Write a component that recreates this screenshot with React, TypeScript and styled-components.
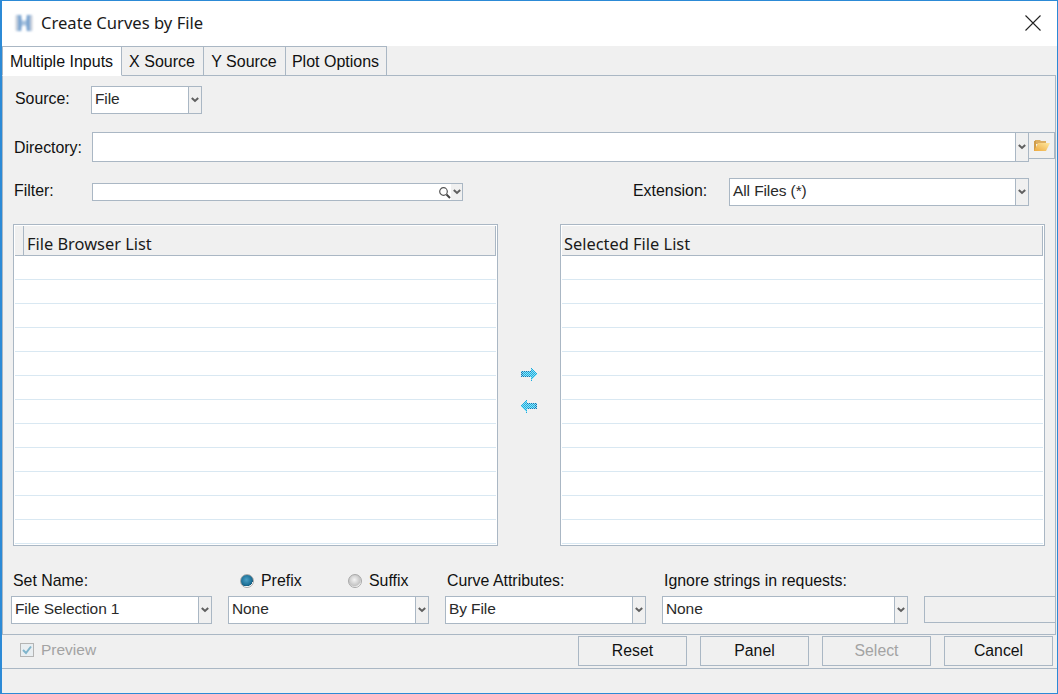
import React from "react";
import styled, { createGlobalStyle } from "styled-components";

const Global = createGlobalStyle`
  html, body { margin: 0; padding: 0; background: #fff; }
  * { box-sizing: border-box; }
`;

const line = "#aab7c4";
const sans = `"Liberation Sans", Arial, sans-serif`;

const Frame = styled.div`
  width: 1058px; height: 694px; display: flex; flex-direction: column;
  border: 1px solid #2c8ad6; border-left-width: 2px; background: #f0f0f0;
  font-family: ${sans}; font-size: 16px; color: #111; overflow: hidden;
`;
const TitleBar = styled.div`
  height: 45px; background: #fff; display: flex; align-items: center;
  padding: 0 16px 1px 11px; flex: none;
`;
const Title = styled.div`
  margin-left: 6px; padding-bottom: 1px; font-family: "Noto Sans", "Open Sans", sans-serif; font-size: 16.6px; color: #1a1a1a;
`;
const CloseBtn = styled.div`
  margin-left: auto; width: 16px; height: 16px; display: flex;
`;
const TabBar = styled.div`
  height: 30px; display: flex; align-items: flex-end; flex: none; margin-bottom: -1px;
  position: relative; z-index: 1;
`;
const Tab = styled.div<{ $active?: boolean; $w: number }>`
  width: ${(p) => p.$w}px; height: 30px; display: flex; align-items: center; justify-content: center;
  border: 1px solid ${line}; border-left-width: ${(p) => (p.$active ? 1 : 0)}px;
  border-bottom-color: ${(p) => (p.$active ? "#fff" : line)};
  background: ${(p) => (p.$active ? "#fff" : "#f0f0f0")};
  font-size: 16px; padding: 1px 1px 0 0;
`;
const Panel = styled.div`
  height: 560px; flex: none; border: 1px solid ${line}; margin-right: 0; overflow: hidden;
  display: flex; flex-direction: column; width: 1054px;
`;
const Row = styled.div<{ $top: number; $h: number; $left?: number }>`
  display: flex; align-items: center; flex: none;
  margin-top: ${(p) => p.$top}px; height: ${(p) => p.$h}px; padding-left: ${(p) => p.$left ?? 0}px;
`;
const Label = styled.div<{ $w: number; $lift?: number; $gap?: number }>`
  width: ${(p) => p.$w}px; flex: none; white-space: nowrap; font-size: 15.9px;
  margin-left: ${(p) => p.$gap ?? 0}px;
  padding-bottom: ${(p) => Math.max(p.$lift ?? 0, 0)}px;
  padding-top: ${(p) => Math.max(-(p.$lift ?? 0), 0)}px;
`;
const Combo = styled.div<{ $w: number; $h: number }>`
  width: ${(p) => p.$w}px; height: ${(p) => p.$h}px; flex: none; display: flex;
  border: 1px solid ${line}; background: #fff; font-size: 15.5px;
`;
const ComboText = styled.div`
  flex: 1; display: flex; align-items: center; padding: 0 0 2px 3px; color: #2a2a2a; white-space: nowrap;
  letter-spacing: -0.1px;
`;
const ComboArrow = styled.div`
  width: 13px; flex: none; display: flex; align-items: center; justify-content: center;
  background: #f0f0f0; border-left: 1px solid ${line};
`;
const FilterSearch = styled.div`
  width: 13px; flex: none; display: flex; align-items: center; justify-content: center; background: #fff;
`;
const FilterArrow = styled.div`
  width: 11px; flex: none; display: flex; align-items: center; justify-content: center; background: #f0f0f0;
`;
const FolderBtn = styled.div`
  width: 26px; height: 27px; flex: none; align-self: flex-start; border: 1px solid ${line}; border-left: none;
  display: flex; align-items: center; justify-content: center;
`;
const Lists = styled.div`
  display: flex; flex: none; margin-top: 18px; padding-left: 10px; height: 322px;
`;
const ListBox = styled.div`
  width: 485px; height: 322px; flex: none; border: 1px solid ${line}; background: #fff;
  padding: 1px 0 0 1px; display: flex; flex-direction: column;
`;
const ListHeader = styled.div`
  height: 30px; flex: none; display: flex; background: #f0f0f0;
  border-bottom: 1px solid ${line}; border-right: 1px solid ${line}; margin-right: 1px;
  font-family: "Noto Sans", "Open Sans", sans-serif; font-size: 16.4px; color: #1a1a1a;
`;
const HeaderStub = styled.div`
  width: 9px; flex: none; border-right: 1px solid ${line};
`;
const HeaderTitle = styled.div<{ $pad: number }>`
  padding: 7px 0 0 ${(p) => p.$pad}px; line-height: 22px;
`;
const ListRow = styled.div`
  height: 24px; flex: none; border-bottom: 1px solid #d9e8f2; margin-right: 1px;
`;
const MoveColumn = styled.div`
  width: 62px; flex: none; display: flex; flex-direction: column; align-items: center; padding: 144px 0 0 0; gap: 19px;
`;
const Fields = styled.div`
  display: grid; grid-template-columns: 201px 201px 201px 246px 160px; column-gap: 16px;
  padding-left: 8px; margin-top: 24px; flex: none;
`;
const Field = styled.div`
  display: flex; flex-direction: column; gap: 4px;
`;
const FieldLabel = styled.div<{ $pad?: number }>`
  height: 22px; display: flex; align-items: center; padding-left: ${(p) => p.$pad ?? 2}px; white-space: nowrap;
  font-size: 15.9px;
`;
const RadioDot = styled.span<{ $on?: boolean }>`
  width: 14px; height: 14px; border-radius: 50%; flex: none; margin-right: 7px; border: 1px solid #a8a8a8;
  background: ${(p) =>
    p.$on
      ? "radial-gradient(circle at 45% 40%, #4aa0c6 0, #1c6f96 55%, #155a7c 65%, #fff 68%)"
      : "radial-gradient(circle at 45% 40%, #f4f4f4 0, #c4c4c4 60%, #e8e8e8 70%, #fff 72%)"};
`;
const RadioText = styled.span<{ $w: number }>`
  width: ${(p) => p.$w}px;
`;
const BlankField = styled.div`
  height: 27px; border: 1px solid ${line}; border-right: none; background: #f0f0f0;
`;
const Footer = styled.div`
  height: 34px; flex: none; display: flex; align-items: center; padding: 0 4px 0 18px; border-bottom: 1px solid ${line};
`;
const CheckBoxWrap = styled.div`
  width: 14px; height: 14px; flex: none; display: flex; border: 1px solid #b4b4b4; background: #e9eef1;
  margin: 0 7px 3px 0;
`;
const PreviewText = styled.div`
  color: #a3a3a3; font-size: 15.5px; padding-bottom: 3px;
`;
const Buttons = styled.div`
  margin-left: auto; display: flex; gap: 13px; padding-bottom: 1px;
`;
const Button = styled.div<{ $off?: boolean }>`
  width: 109px; height: 30px; border: 1px solid ${line}; display: flex; align-items: center; justify-content: center;
  color: ${(p) => (p.$off ? "#a3a3a3" : "#111")}; font-size: 15.8px;
`;

const Chevron = () => (
  <svg width="8" height="6" viewBox="0 0 8 6">
    <path d="M0.8 1 L4 4 L7.2 1" fill="none" stroke="#5f5f5f" strokeWidth="2" />
  </svg>
);

const AppIcon = () => (
  <svg width="22" height="22" viewBox="0 0 22 22">
    <defs>
      <filter id="soft" x="-20%" y="-20%" width="140%" height="140%"><feGaussianBlur stdDeviation="0.9" /></filter>
    </defs>
    <g filter="url(#soft)">
      <path d="M3 3 h5 c0 4 1 6 3 6 s3 -2 3 -6 h5 v16 h-5 c0 -4 -1 -6 -3 -6 s-3 2 -3 6 H3 Z" fill="#a3c0de" />
      <path d="M7 3 v16 M15 3 v16" stroke="#6f9ccc" strokeWidth="2.4" />
      <path d="M3.5 4 v14 M18.5 4 v14" stroke="#c9ced6" strokeWidth="1.8" />
    </g>
  </svg>
);

const Folder = () => (
  <svg width="16" height="13" viewBox="0 0 16 13">
    <defs>
      <linearGradient id="fold" x1="1" y1="0" x2="0" y2="1">
        <stop offset="0" stopColor="#ffe9a0" /><stop offset="1" stopColor="#eda93e" />
      </linearGradient>
    </defs>
    <path d="M1 1 h5 l1 1 h5 v3 H1 Z" fill="#dcae62" />
    <path d="M0 12 V2 h2 v10 Z" fill="#cf9c4a" />
    <path d="M4 4 H16 L12 12 H0 Z" fill="url(#fold)" />
  </svg>
);

const Search = () => (
  <svg width="13" height="13" viewBox="0 0 13 13">
    <circle cx="5.5" cy="5.5" r="3.8" fill="none" stroke="#555" strokeWidth="1.2" />
    <path d="M8.5 8.5 L12 12" stroke="#444" strokeWidth="2" />
  </svg>
);

const MoveArrow = ({ flip, id }: { flip?: boolean; id: string }) => (
  <svg width="16" height="13" viewBox="0 0 16 13" shapeRendering="crispEdges">
    <defs>
      <pattern id={id} width="2" height="2" patternUnits="userSpaceOnUse">
        <rect width="2" height="2" fill="#8be4f7" />
        <rect width="1" height="1" fill="#1fa9dd" />
        <rect x="1" y="1" width="1" height="1" fill="#1fa9dd" />
      </pattern>
      <pattern id={`${id}e`} width="2" height="2" patternUnits="userSpaceOnUse">
        <rect width="1" height="1" fill="#1f6fae" />
        <rect x="1" y="1" width="1" height="1" fill="#1f6fae" />
      </pattern>
    </defs>
    <g transform={flip ? "translate(16 0) scale(-1 1)" : undefined}>
      <path d="M0 3 H10 V0 H11 V1 H12 V2 H13 V3 H14 V4 H15 V5 H16 V7 H15 V8 H14 V9 H13 V10 H12 V11 H11 V13 H10 V9 H0 Z" fill={`url(#${id})`} />
      <path d="M0 3 H10 V4 H0 Z M0 8 H10 V9 H0 Z M0 3 H2 V9 H0 Z" fill={`url(#${id}e)`} />
    </g>
  </svg>
);

const Check = () => (
  <svg width="12" height="12" viewBox="0 0 12 12">
    <path d="M2 6 L5 9 L10 2.5" fill="none" stroke="#7fb4cb" strokeWidth="2" />
  </svg>
);

const rows = Array.from({ length: 12 });

const Select = ({ w, h, value }: { w: number; h: number; value?: string }) => (
  <Combo $w={w} $h={h}>
    <ComboText>{value}</ComboText>
    <ComboArrow><Chevron /></ComboArrow>
  </Combo>
);

export default function App() {
  return (
    <Frame>
      <Global />
      <TitleBar>
        <AppIcon />
        <Title>Create Curves by File</Title>
        <CloseBtn>
          <svg width="16" height="16" viewBox="0 0 16 16">
            <path d="M0.5 0.5 L15.5 15.5 M15.5 0.5 L0.5 15.5" stroke="#222" strokeWidth="1.1" />
          </svg>
        </CloseBtn>
      </TitleBar>
      <TabBar>
        <Tab $active $w={120}>Multiple Inputs</Tab>
        <Tab $w={82}>X Source</Tab>
        <Tab $w={82}>Y Source</Tab>
        <Tab $w={101}>Plot Options</Tab>
      </TabBar>
      <Panel>
        <Row $top={10} $h={28} $left={12}>
          <Label $w={76} $lift={3}>Source:</Label>
          <Select w={111} h={28} value="File" />
        </Row>
        <Row $top={18} $h={30} $left={11}>
          <Label $w={78} $lift={-1}>Directory:</Label>
          <Select w={937} h={30} />
          <FolderBtn><Folder /></FolderBtn>
        </Row>
        <Row $top={16} $h={28} $left={11}>
          <Label $w={78} $lift={3}>Filter:</Label>
          <Combo $w={371} $h={18}>
            <ComboText />
            <FilterSearch><Search /></FilterSearch>
            <FilterArrow><Chevron /></FilterArrow>
          </Combo>
          <Label $w={96} $lift={3} $gap={170}>Extension:</Label>
          <Select w={300} h={28} value="All Files (*)" />
        </Row>
        <Lists>
          <ListBox>
            <ListHeader>
              <HeaderStub />
              <HeaderTitle $pad={3}>File Browser List</HeaderTitle>
            </ListHeader>
            {rows.map((_, i) => <ListRow key={i} />)}
          </ListBox>
          <MoveColumn>
            <MoveArrow id="a1" />
            <MoveArrow id="a2" flip />
          </MoveColumn>
          <ListBox>
            <ListHeader>
              <HeaderTitle $pad={2}>Selected File List</HeaderTitle>
            </ListHeader>
            {rows.map((_, i) => <ListRow key={i} />)}
          </ListBox>
        </Lists>
        <Fields>
          <Field>
            <FieldLabel>Set Name:</FieldLabel>
            <Select w={201} h={28} value="File Selection 1" />
          </Field>
          <Field>
            <FieldLabel $pad={12}>
              <RadioDot $on />
              <RadioText $w={87}>Prefix</RadioText>
              <RadioDot />
              <RadioText $w={50}>Suffix</RadioText>
            </FieldLabel>
            <Select w={201} h={28} value="None" />
          </Field>
          <Field>
            <FieldLabel>Curve Attributes:</FieldLabel>
            <Select w={201} h={28} value="By File" />
          </Field>
          <Field>
            <FieldLabel>Ignore strings in requests:</FieldLabel>
            <Select w={246} h={28} value="None" />
          </Field>
          <Field>
            <FieldLabel />
            <BlankField />
          </Field>
        </Fields>
      </Panel>
      <Footer>
        <CheckBoxWrap><Check /></CheckBoxWrap>
        <PreviewText>Preview</PreviewText>
        <Buttons>
          <Button>Reset</Button>
          <Button>Panel</Button>
          <Button $off>Select</Button>
          <Button>Cancel</Button>
        </Buttons>
      </Footer>
    </Frame>
  );
}
